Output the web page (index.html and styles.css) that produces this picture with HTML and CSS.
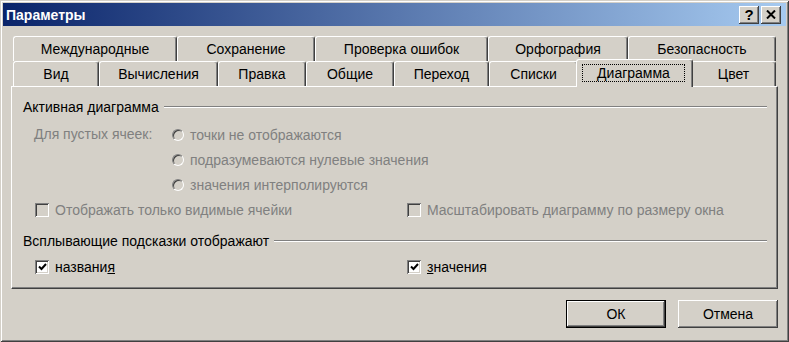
FILE: index.html
```html
<!DOCTYPE html>
<html lang="ru">
<head>
    <meta charset="UTF-8">
    <title>Параметры</title>
    <link rel="stylesheet" href="styles.css">
</head>
<body>
    <div class="window">
        <div class="titlebar">
            <span class="title">Параметры</span>
            <div class="cap-buttons">
                <button class="cap-btn help">?</button>
                <button class="cap-btn">
                    <svg width="10" height="9" viewBox="0 0 10 9">
                        <path d="M1 0.5 L9 8.5 M9 0.5 L1 8.5" stroke="#000" stroke-width="2" fill="none"/>
                    </svg>
                </button>
            </div>
        </div>

        <div class="content">
            <div class="tabs">
                <div class="tab-row row-back">
                    <div class="tab">Международные</div>
                    <div class="tab">Сохранение</div>
                    <div class="tab">Проверка ошибок</div>
                    <div class="tab">Орфография</div>
                    <div class="tab">Безопасность</div>
                </div>
                <div class="tab-row row-front">
                    <div class="tab">Вид</div>
                    <div class="tab">Вычисления</div>
                    <div class="tab">Правка</div>
                    <div class="tab">Общие</div>
                    <div class="tab">Переход</div>
                    <div class="tab">Списки</div>
                    <div class="tab active"><span class="focus">Диаграмма</span></div>
                    <div class="tab">Цвет</div>
                </div>
            </div>

            <div class="panel">
                <div class="group-title">Активная диаграмма</div>

                <div class="empty-cells">
                    <span class="disabled">Для пустых ячеек:</span>
                    <div class="options">
                        <label class="option disabled"><span class="radio"></span><span>точки не отображаются</span></label>
                        <label class="option disabled"><span class="radio"></span><span>подразумеваются нулевые значения</span></label>
                        <label class="option disabled"><span class="radio"></span><span>значения интерполируются</span></label>
                    </div>
                </div>

                <div class="check-row">
                    <label class="check disabled"><span class="box"></span><span>Отображать только видимые ячейки</span></label>
                    <label class="check disabled"><span class="box"></span><span>Масштабировать диаграмму по размеру окна</span></label>
                </div>

                <div class="group-title second">Всплывающие подсказки отображают</div>

                <div class="check-row last">
                    <label class="check"><span class="box on"><svg width="9" height="8" viewBox="0 0 9 8"><path d="M1 3.5 L3.5 6 L8 1" stroke="#000" stroke-width="2" fill="none"/></svg></span><span>названи<u>я</u></span></label>
                    <label class="check"><span class="box on"><svg width="9" height="8" viewBox="0 0 9 8"><path d="M1 3.5 L3.5 6 L8 1" stroke="#000" stroke-width="2" fill="none"/></svg></span><span><u>з</u>начения</span></label>
                </div>
            </div>

            <div class="actions">
                <button class="btn default">ОК</button>
                <button class="btn">Отмена</button>
            </div>
        </div>
    </div>
</body>
</html>
```

FILE: styles.css
```css
body {
    margin: 0;
    font-family: "Liberation Sans", Arial, sans-serif;
    font-size: 14px;
    color: #000;
    background-color: #d4d0c8;
}
.window {
    width: 789px;
    height: 342px;
    box-sizing: border-box;
    padding: 3px;
    background-color: #d4d0c8;
    box-shadow: inset 1px 1px #d4d0c8, inset -1px -1px #404040, inset 2px 2px #fff, inset -2px -2px #808080;
    display: flex;
    flex-direction: column;
}
.titlebar {
    height: 23px;
    display: flex;
    align-items: center;
    justify-content: space-between;
    padding: 0 5px 0 3px;
    background: linear-gradient(to right, #0a246a, #a6caf0);
    color: #fff;
}
.title {
    font-weight: bold;
    font-size: 14px;
}
.cap-buttons {
    display: flex;
    gap: 2px;
}
.cap-btn {
    width: 20px;
    height: 18px;
    box-sizing: border-box;
    padding: 0;
    border: 0;
    background-color: #d4d0c8;
    box-shadow: inset -1px -1px #404040, inset 1px 1px #fff, inset -2px -2px #808080;
    display: flex;
    align-items: center;
    justify-content: center;
    font: bold 15px "Liberation Sans", Arial, sans-serif;
    color: #000;
}
.content {
    flex: 1;
    padding: 10px 8px 0;
    display: flex;
    flex-direction: column;
}
.tabs {
    margin: 0 2px;
    position: relative;
    z-index: 1;
}
.tab-row {
    display: grid;
    height: 25px;
}
.row-back {
    grid-template-columns: 164px 138px 173px 140px 148px;
}
.row-front {
    grid-template-columns: 86px 119px 88px 88px 95px 89px 113px 85px;
}
.tab {
    box-sizing: border-box;
    background-color: #d4d0c8;
    border-top: 1px solid #fff;
    border-left: 1px solid #fff;
    border-right: 1px solid #404040;
    border-radius: 3px 3px 0 0;
    box-shadow: inset -1px 0 #808080;
    display: flex;
    align-items: center;
    justify-content: center;
}
.tab.active {
    margin: -2px -2px -1px;
    z-index: 2;
}
.focus {
    flex: 1;
    margin: 0 7px 1px 5px;
    height: 18px;
    line-height: 16px;
    box-sizing: border-box;
    border: 1px dotted #000;
    text-align: center;
}
.panel {
    height: 203px;
    box-sizing: border-box;
    border: 1px solid;
    border-color: #fff #404040 #404040 #fff;
    box-shadow: inset -1px -1px #808080;
    padding: 10px 10px 0 11px;
}
.group-title {
    height: 20px;
    display: flex;
    align-items: center;
}
.group-title::after {
    content: "";
    flex: 1;
    margin-left: 5px;
    border-top: 1px solid #808080;
    border-bottom: 1px solid #fff;
}
.group-title.second {
    margin-top: 8px;
}
.disabled {
    color: #808080;
}
.empty-cells {
    margin: 5px 0 0 11px;
    display: grid;
    grid-template-columns: 138px auto;
}
.empty-cells > span {
    height: 25px;
    line-height: 25px;
}
.option {
    height: 25px;
    display: flex;
    align-items: center;
    gap: 6px;
}
.radio {
    width: 12px;
    height: 12px;
    box-sizing: border-box;
    border-radius: 50%;
    border: 1px solid;
    border-color: #808080 #fff #fff #808080;
    box-shadow: inset 1px 1px #404040;
    background-color: #d4d0c8;
}
.check-row {
    margin-left: 12px;
    height: 26px;
    display: grid;
    grid-template-columns: 372px auto;
    align-items: center;
}
.check-row.last {
    margin-top: 3px;
}
.check {
    display: flex;
    align-items: center;
    gap: 6px;
}
.box {
    width: 14px;
    height: 14px;
    box-sizing: border-box;
    background-color: #d4d0c8;
    box-shadow: inset 1px 1px #808080, inset -1px -1px #fff, inset 2px 2px #404040, inset -2px -2px #d4d0c8;
    display: flex;
    align-items: center;
    justify-content: center;
}
.box.on {
    background-color: #fff;
}
.actions {
    display: flex;
    justify-content: flex-end;
    gap: 12px;
    margin-top: 11px;
}
.btn {
    width: 100px;
    height: 28px;
    box-sizing: border-box;
    border: 0;
    padding: 0;
    background-color: #d4d0c8;
    box-shadow: inset -1px -1px #404040, inset 1px 1px #fff, inset -2px -2px #808080;
    font: 14px "Liberation Sans", Arial, sans-serif;
    color: #000;
}
.btn.default {
    border: 1px solid #000;
}
```
